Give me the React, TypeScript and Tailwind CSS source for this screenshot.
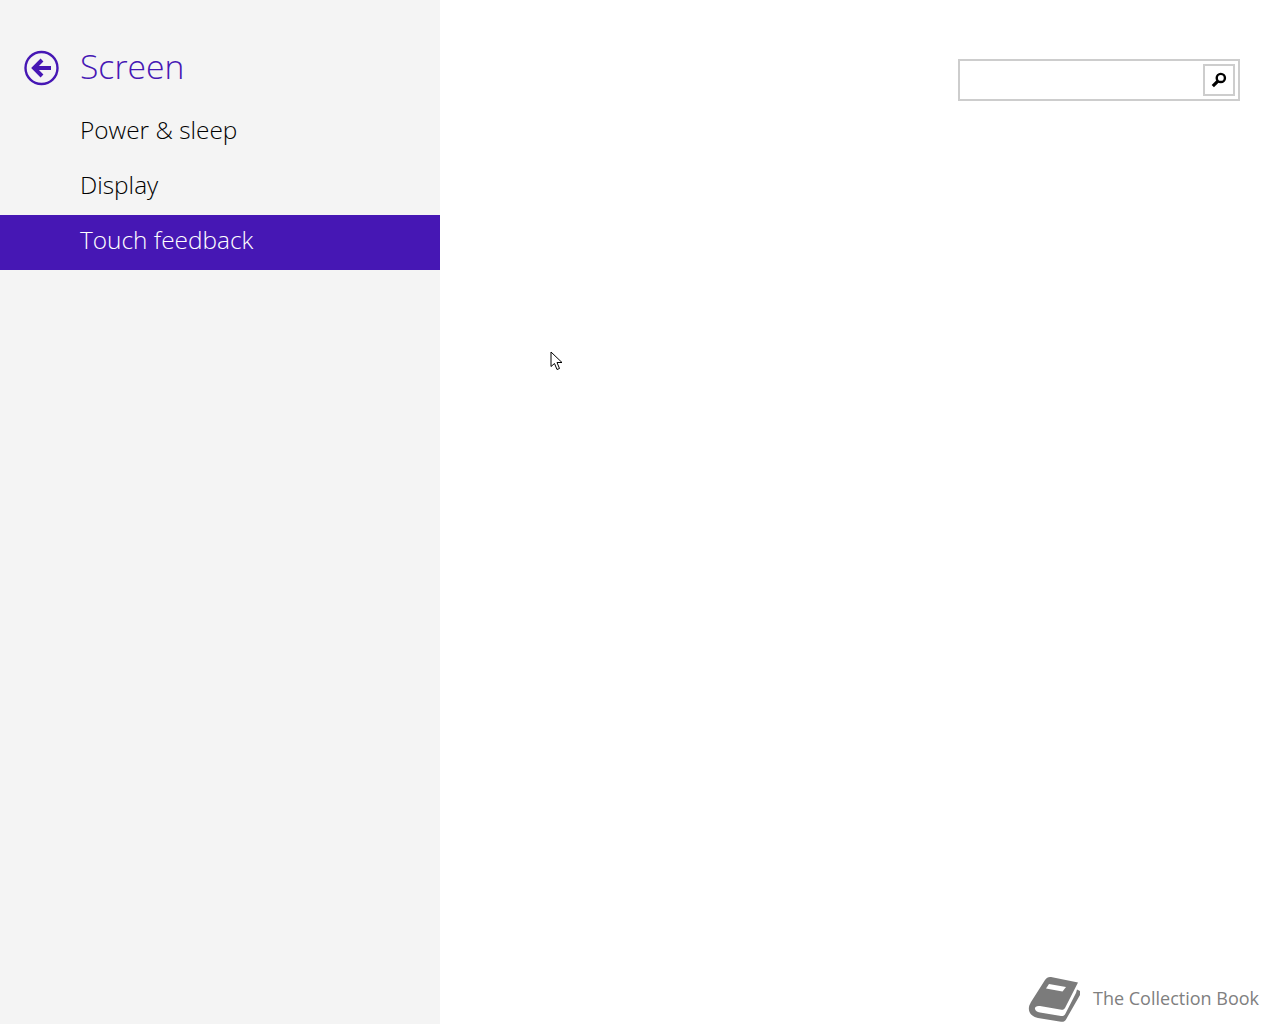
import React from "react";

const navItems = ["Power & sleep", "Display", "Touch feedback"];
const activeItem = "Touch feedback";

function BackIcon() {
    return (
        <svg width="36" height="36" viewBox="0 0 36 36" fill="none" className="shrink-0">
            <circle cx="17.5" cy="18" r="16" stroke="#4617b4" strokeWidth="2.4" />
            <path d="M18 10 L10 18 L18 26" stroke="#4617b4" strokeWidth="4" />
            <path d="M11 18 H27" stroke="#4617b4" strokeWidth="4" />
        </svg>
    );
}

function SearchIcon() {
    return (
        <svg width="16" height="16" viewBox="0 0 14 14" fill="none">
            <circle cx="8.6" cy="5.2" r="3.6" stroke="#000" strokeWidth="2.1" />
            <path d="M6 8 L1.6 12.4" stroke="#000" strokeWidth="2.8" />
        </svg>
    );
}

function BookIcon() {
    return (
        <svg width="52" height="46" viewBox="0 0 52 46" fill="none" className="shrink-0">
            <path
                d="M23 1 L50 6.5 L37 32 C36 33.5 35 34 33.5 33.7 L12 30 C8.5 29.5 6.5 31 7 33 C7.5 35 9 36 12 36.5 L33 40 C35 40.3 36.5 39.5 37.5 37.5 L48 17 L49 13.5 L52 15 V19 L38 43.5 C37 45.5 35 46 33 45.7 L10 42 C4 40.5 0 36.5 1 31 C1.2 29.5 2 28 3 26 L17 4 C18.5 1.8 20.5 0.6 23 1 Z"
                fill="#7b7b7b"
            />
            <path d="M21 8 L38 11 L34.5 15.5 L18 12.5 Z" fill="#fff" />
        </svg>
    );
}

function CursorIcon() {
    return (
        <svg width="14" height="20" viewBox="0 0 14 20" fill="#fff" stroke="#000" strokeWidth="1">
            <path d="M1 1 L1 15.5 L4.5 12.5 L7 18.5 L9.5 17.5 L7 11.5 L12 11.5 Z" />
        </svg>
    );
}

export default function App() {
    return (
        <div className="relative flex h-[1024px] w-[1280px] overflow-hidden bg-white font-['Open_Sans','Noto_Sans',sans-serif]">
            {/* Sidebar */}
            <aside className="w-[440px] shrink-0 bg-[#f4f4f4]">
                <div className="flex h-[105px] items-start pl-[24px] pt-[50px]">
                    <BackIcon />
                    <h1 className="ml-[20px] mt-[-9px] text-[33.7px] leading-[50px] font-light text-[#4617b4]">Screen</h1>
                </div>
                <nav className="flex flex-col">
                    {navItems.map((item) => (
                        <div
                            key={item}
                            className={
                                item === activeItem
                                    ? "h-[55px] bg-[#4617b4] pl-[80px] text-[24.4px] leading-[50px] font-light text-white"
                                    : "h-[55px] pl-[80px] text-[24.4px] leading-[50px] font-light text-black"
                            }
                        >
                            {item}
                        </div>
                    ))}
                </nav>
            </aside>

            {/* Main */}
            <main className="flex flex-1 flex-col justify-between">
                <div className="flex justify-end pr-[40px] pt-[59px]">
                    <div className="flex h-[42px] w-[282px] items-center justify-end border-2 border-[#cdcdcd] bg-white pr-[3px]">
                        <button className="flex h-[32px] w-[32px] items-center justify-center border-2 border-[#cdcdcd]">
                            <SearchIcon />
                        </button>
                    </div>
                </div>
                <div className="flex items-center justify-end pb-[2px] pr-[21px]">
                    <BookIcon />
                    <span className="mb-[2px] ml-[13px] text-[18px] leading-[44px] text-[#808080]">The Collection Book</span>
                </div>
            </main>

            {/* Mouse pointer */}
            <div className="absolute left-[550px] top-[351px]">
                <CursorIcon />
            </div>
        </div>
    );
}
